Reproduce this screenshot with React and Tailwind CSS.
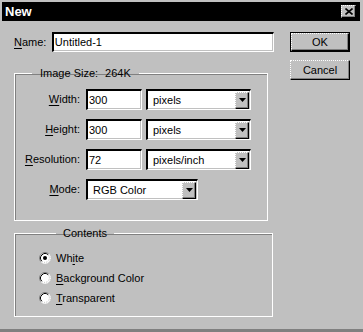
import React from "react";

const raised =
  "border-t border-l border-t-white border-l-white [border-top-style:dotted] [border-left-style:dotted] border-b border-r border-b-black border-r-black shadow-[inset_-1px_-1px_0_#808080]";
const sunken =
  "border-t-2 border-l-2 border-t-black border-l-black border-b border-r border-b-white border-r-white [border-bottom-style:dotted] [border-right-style:dotted] shadow-[inset_-1px_-1px_0_#c0c0c0] bg-white";

function U({ children }) {
  return <span className="underline underline-offset-[2px]">{children}</span>;
}

function Arrow() {
  return (
    <svg width="7" height="4" viewBox="0 0 7 4">
      <polygon points="0,0 7,0 3.5,4" fill="black" />
    </svg>
  );
}

function Select({ value, w }) {
  return (
    <div className={`${sunken} ${w} h-[21px] flex items-center justify-between`}>
      <span className="pl-[5px]">{value}</span>
      <div className={`${raised} bg-[#c0c0c0] w-[14px] h-[17px] mr-[1px] flex items-center justify-center`}>
        <Arrow />
      </div>
    </div>
  );
}

function Field({ value, w }) {
  return (
    <div className={`${sunken} ${w} h-[21px] flex items-center pl-[1px]`}>
      <span>{value}</span>
    </div>
  );
}

function Radio({ checked }) {
  return (
    <svg width="12" height="12" viewBox="0 0 12 12">
      <circle cx="6" cy="6" r="5.5" fill="white" />
      <path d="M2.11 9.89 A5.5 5.5 0 0 1 9.89 2.11" stroke="#808080" strokeWidth="1" fill="none" />
      <path d="M2.82 9.18 A4.5 4.5 0 0 1 9.18 2.82" stroke="black" strokeWidth="1" fill="none" />
      <path d="M9.89 2.11 A5.5 5.5 0 0 1 2.11 9.89" stroke="#ffffff" strokeWidth="1" fill="none" strokeDasharray="1 1" />
      <path d="M9.18 2.82 A4.5 4.5 0 0 1 2.82 9.18" stroke="#c0c0c0" strokeWidth="1" fill="none" strokeDasharray="1 1" />
      {checked && <circle cx="6" cy="6" r="2" fill="black" />}
    </svg>
  );
}

function Row({ label, children }) {
  return (
    <div className="flex items-center h-[21px]">
      <div className="w-[66px] text-right pr-[1px]">{label}</div>
      <div className="ml-[5px] flex items-center gap-[4px]">{children}</div>
    </div>
  );
}

export default function App() {
  return (
    <div className="w-[363px] h-[332px] bg-[#c0c0c0] text-[11px] text-black [font-family:'Liberation_Sans',Arial,sans-serif] leading-none pt-[2px] pl-[2px] pr-[3px] border-b-[3px] border-b-[#808080] flex flex-col">
      <div className="h-[19px] bg-black flex items-center justify-between pl-[3px] pr-[4px]">
        <span className="text-white font-bold text-[13px]">New</span>
        <div className={`${raised} bg-[#c0c0c0] w-[15px] h-[13px] flex items-center justify-center`}>
          <svg width="8" height="7" viewBox="0 0 8 7">
            <path d="M0.5 0.5 L7.5 6.5 M7.5 0.5 L0.5 6.5" stroke="black" strokeWidth="1.6" />
          </svg>
        </div>
      </div>

      <div className="flex pl-[12px] pt-[11px]">
        <div className="w-[260px] flex flex-col">
          <div className="flex items-center h-[20px]">
            <div className="w-[38px]">
              <U>N</U>ame:
            </div>
            <div className={`${sunken} w-[223px] h-[20px] flex items-center pl-[1px]`}>
              <span>Untitled-1</span>
            </div>
          </div>

          <fieldset className="mt-[15px] w-[254px] border border-white shadow-[inset_1px_1px_0_#808080] pt-[9px] pb-[20px] flex flex-col gap-[9px]">
            <legend className="ml-[17px] px-[8px] h-[13px] leading-[13px]">
              Image Size:<span className="ml-[7px]">264K</span>
            </legend>
            <Row label={<><U>W</U>idth:</>}>
              <Field value="300" w="w-[56px]" />
              <Select value="pixels" w="w-[105px]" />
            </Row>
            <Row label={<><U>H</U>eight:</>}>
              <Field value="300" w="w-[56px]" />
              <Select value="pixels" w="w-[105px]" />
            </Row>
            <Row label={<><U>R</U>esolution:</>}>
              <Field value="72" w="w-[56px]" />
              <Select value="pixels/inch" w="w-[105px]" />
            </Row>
            <Row label={<><U>M</U>ode:</>}>
              <Select value="RGB Color" w="w-[112px]" />
            </Row>
          </fieldset>

          <fieldset className="mt-[6px] w-[259px] border border-white shadow-[inset_1px_1px_0_#808080] pt-[12px] pb-[12px] pl-[24px] flex flex-col gap-[8px]">
            <legend className="ml-[17px] px-[7px] h-[13px] leading-[13px]">Contents</legend>
            <div className="flex items-center h-[12px] gap-[5px]">
              <Radio checked />
              <span>
                Wh<U>i</U>te
              </span>
            </div>
            <div className="flex items-center h-[12px] gap-[5px]">
              <Radio />
              <span>
                <U>B</U>ackground Color
              </span>
            </div>
            <div className="flex items-center h-[12px] gap-[5px]">
              <Radio />
              <span>
                <U>T</U>ransparent
              </span>
            </div>
          </fieldset>
        </div>

        <div className="ml-[16px] flex flex-col gap-[8px]">
          <div className="w-[60px] h-[20px] border border-black">
            <div className={`${raised} w-full h-full flex items-center justify-center`}>OK</div>
          </div>
          <div className={`${raised} w-[60px] h-[20px] flex items-center justify-center`}>Cancel</div>
        </div>
      </div>
    </div>
  );
}
